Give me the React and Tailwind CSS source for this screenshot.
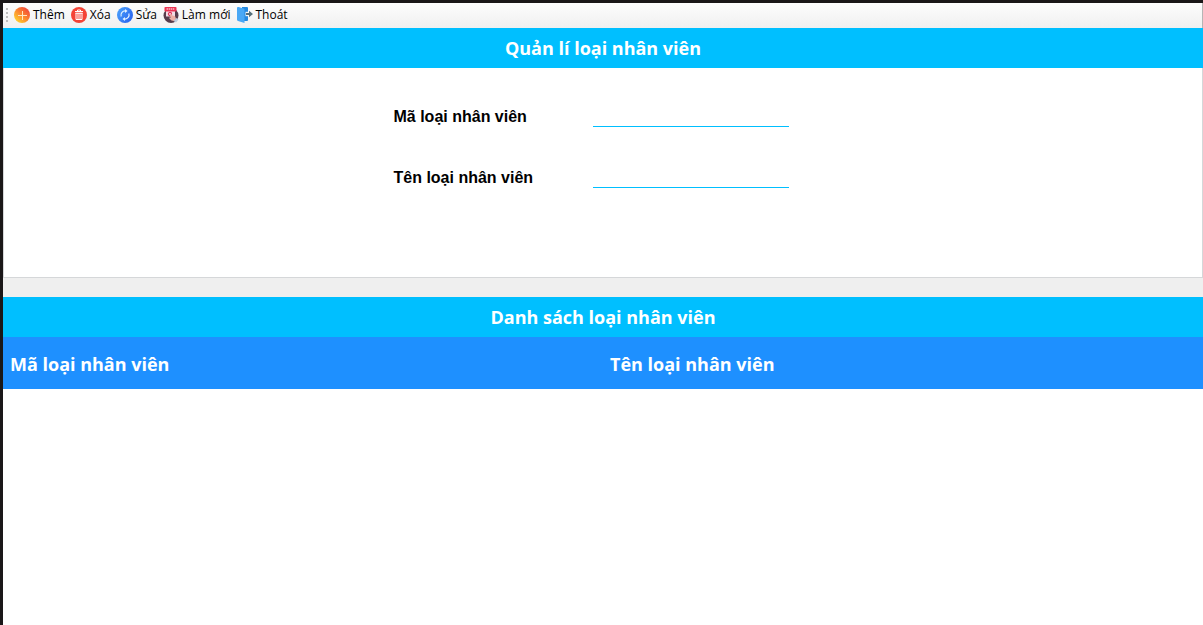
import React from "react";

function AddIcon() {
  return (
    <svg viewBox="0 0 16 16" className="size-4" aria-hidden="true">
      <defs>
        <linearGradient id="add-fill" x1="0.9" y1="0.1" x2="0.15" y2="0.9">
          <stop offset="0" stopColor="#f0443c" />
          <stop offset="0.5" stopColor="#fb8530" />
          <stop offset="1" stopColor="#ffd02e" />
        </linearGradient>
      </defs>
      <circle cx="8" cy="8" r="8" fill="url(#add-fill)" />
      <path d="M8.5 4v9M4 8.5h9" stroke="#ffe6c4" strokeWidth="1" />
    </svg>
  );
}

function DeleteIcon() {
  return (
    <svg viewBox="0 0 16 16" className="size-4" aria-hidden="true">
      <circle cx="8" cy="8" r="8" fill="#f44336" />
      <path d="M6.5 4V3h3v1M4 4.500h8" fill="none" stroke="#fff" strokeWidth="1" />
      <path d="M5 6v6.500h6V6M7 6v6M9 6v6M4.500 6.200h7" fill="none" stroke="#fff" strokeWidth="1" />
    </svg>
  );
}

function EditIcon() {
  return (
    <svg viewBox="0 0 16 16" className="size-4" aria-hidden="true">
      <defs>
        <linearGradient id="edit-fill" x1="0" y1="0.2" x2="1" y2="0.8">
          <stop offset="0" stopColor="#4aa0fb" />
          <stop offset="1" stopColor="#2862ee" />
        </linearGradient>
      </defs>
      <circle cx="8" cy="8" r="8" fill="url(#edit-fill)" />
      <path
        d="M4.200 9.500A4.100 4.100 0 0 1 8.500 4M11.800 6.500A4.100 4.100 0 0 1 7.500 12"
        fill="none"
        stroke="#e4f2ff"
        strokeWidth="1.200"
      />
      <path d="M8 2l2.500 2L8 6zM8 10v4l-2.500-2z" fill="#e4f2ff" />
    </svg>
  );
}

function ResetIcon() {
  return (
    <svg viewBox="0 0 16 16" className="size-4" aria-hidden="true">
      <circle cx="8" cy="8.500" r="7.500" fill="#563c4b" />
      <path d="M3 4h9v5.500H3z" fill="#f3dce4" />
      <rect x="1.500" y="0" width="12" height="4.500" rx=".8" fill="#ea3352" />
      <path d="M3.500 2h8" stroke="#f9bcc7" strokeWidth="1.500" strokeDasharray="1.500 .6" />
      <circle cx="7" cy="7" r="1.600" fill="none" stroke="#e0315a" strokeWidth="1.100" />
      <path d="M6.500 7.200 8 6.800l1.500 1.700 2.500.5 1 2.500-2 2.500-2.500-.5-2.500-2.500 1-.7 1 .5z" fill="#edb0a5" />
      <path d="m10.500 14 3-3 2 1.500-2.500 3z" fill="#bccbdc" />
    </svg>
  );
}

function ExitIcon() {
  return (
    <svg viewBox="0 0 16 16" className="size-4" aria-hidden="true">
      <path d="M5 0h5a1 1 0 0 1 1 1v12a1 1 0 0 1-1 1H5z" fill="#2589e0" />
      <path d="M0 1.300A1.300 1.300 0 0 1 1.600 0l5 1.600a1.300 1.300 0 0 1 .9 1.200V16L1 14a1.300 1.300 0 0 1-1-1.300z" fill="#49a8f5" />
      <path d="M8.500 4.800H11V9.200H8.500z" fill="#f3f5f6" />
      <path d="M9 6h3V3.700L16 7l-4 3.300V8H9z" fill="#546e7a" />
    </svg>
  );
}

const actions = [
  { label: "Thêm", Icon: AddIcon },
  { label: "Xóa", Icon: DeleteIcon },
  { label: "Sửa", Icon: EditIcon },
  { label: "Làm mới", Icon: ResetIcon },
  { label: "Thoát", Icon: ExitIcon },
];

function Toolbar() {
  return (
    <div role="toolbar" className="flex h-[25px] items-center border-r border-[#b5b5b5] bg-linear-to-b from-[#fdfdfd] to-[#f0f0f0] pb-px pl-[3px]">
      <div className="mr-[6px] flex flex-col gap-[2px]" aria-hidden="true">
        <span className="size-[2px] bg-[#bdbdbd]" />
        <span className="size-[2px] bg-[#bdbdbd]" />
        <span className="size-[2px] bg-[#bdbdbd]" />
        <span className="size-[2px] bg-[#bdbdbd]" />
      </div>
      <div className="flex items-center gap-[6px]">
        {actions.map(({ label, Icon }) => (
          <button key={label} type="button" className="flex items-center gap-[3px] text-xs text-black">
            <Icon />
            {label}
          </button>
        ))}
      </div>
    </div>
  );
}

function Banner({ children }) {
  return (
    <h2 className="flex h-10 items-center justify-center bg-[#00bfff] text-lg font-bold text-white">
      {children}
    </h2>
  );
}

function Field({ id, label }) {
  return (
    <div className="flex h-6 items-end">
      <label htmlFor={id} className="w-[199px] text-base leading-5 font-bold text-black">
        {label}
      </label>
      <input id={id} type="text" className="h-6 w-[196px] border-b border-[#00bfff] bg-white text-base outline-none" />
    </div>
  );
}

export default function App() {
  return (
    <div className="flex min-h-screen flex-col border-t-[3px] border-l-[3px] border-[#1a1718] bg-[#efefef] font-['Open_Sans','Noto_Sans',sans-serif]">
      <Toolbar />
      <Banner>Quản lí loại nhân viên</Banner>
      <form className="flex min-h-[210px] justify-center border-x border-b border-[#d5d7d9] bg-white pt-[35px] pr-6 font-['Liberation_Sans',Arial,sans-serif]">
        <div className="flex flex-col gap-[37px]">
          <Field id="type-code" label="Mã loại nhân viên" />
          <Field id="type-name" label="Tên loại nhân viên" />
        </div>
      </form>
      <section className="mt-[19px] flex-1 bg-white">
        <Banner>Danh sách loại nhân viên</Banner>
        <table className="w-full table-fixed border-collapse bg-[#1e90ff] text-left text-lg text-white">
          <thead>
            <tr className="h-[52px]">
              <th scope="col" className="px-[7px] pt-[2px] font-bold">Mã loại nhân viên</th>
              <th scope="col" className="px-[7px] pt-[2px] font-bold">Tên loại nhân viên</th>
            </tr>
          </thead>
        </table>
      </section>
    </div>
  );
}
